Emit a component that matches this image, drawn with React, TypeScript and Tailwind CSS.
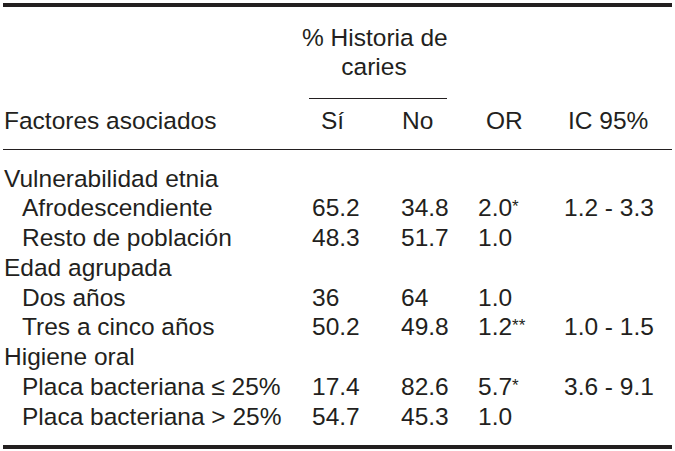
type Row = {
  label: string;
  group?: boolean;
  si?: string;
  no?: string;
  or?: string;
  mark?: string;
  ic?: string;
};

const rows: Row[] = [
  { label: 'Vulnerabilidad etnia', group: true },
  { label: 'Afrodescendiente', si: '65.2', no: '34.8', or: '2.0', mark: '*', ic: '1.2 - 3.3' },
  { label: 'Resto de población', si: '48.3', no: '51.7', or: '1.0' },
  { label: 'Edad agrupada', group: true },
  { label: 'Dos años', si: '36', no: '64', or: '1.0' },
  { label: 'Tres a cinco años', si: '50.2', no: '49.8', or: '1.2', mark: '**', ic: '1.0 - 1.5' },
  { label: 'Higiene oral', group: true },
  { label: 'Placa bacteriana ≤ 25%', si: '17.4', no: '82.6', or: '5.7', mark: '*', ic: '3.6 - 9.1' },
  { label: 'Placa bacteriana > 25%', si: '54.7', no: '45.3', or: '1.0' },
];

const cols = 'grid grid-cols-[309px_89px_77px_86px_108px]';

const App = () => {
  return (
    <div className="w-[675px] h-[451px] bg-white overflow-hidden">
      <div className="ml-[3px] w-[669px] pt-[3px] text-[24.5px] text-[#231f20] font-['Liberation_Sans',Arial,sans-serif]">
        <div className="h-[4px] bg-[#231f20]"></div>

        {/* header */}
        <div className={cols}>
          <div className="col-start-2 col-span-2 pt-[16px]">
            <div className="ml-[-10px] w-[144px] text-center leading-[29px] whitespace-nowrap">
              % Historia de
              <br />
              caries
            </div>
            <div className="ml-[-3px] mt-[17px] w-[138px] h-[1px] bg-[#231f20]"></div>
          </div>
        </div>
        <div className={`${cols} mt-[6.6px] leading-[29.75px] whitespace-nowrap`}>
          <div className="pl-[1px]">Factores asociados</div>
          <div className="pl-[9px]">Sí</div>
          <div className="pl-[1px]">No</div>
          <div className="pl-[8px]">OR</div>
          <div className="pl-[4px]">IC 95%</div>
        </div>
        <div className="mt-[13.65px] h-[1px] bg-[#231f20]"></div>

        {/* body */}
        <div className="pt-[13.64px] pb-[13.6px]">
          {rows.map((r) => (
            <div key={r.label} className={`${cols} h-[29.75px] leading-[29.75px] whitespace-nowrap`}>
              <div className={r.group ? 'pl-[1px]' : 'pl-[19px]'}>{r.label}</div>
              <div>{r.si}</div>
              <div>{r.no}</div>
              <div>
                {r.or}
                {r.mark && <span className="relative top-[-4px] text-[17px]">{r.mark}</span>}
              </div>
              <div>{r.ic}</div>
            </div>
          ))}
        </div>
        <div className="h-[4px] bg-[#231f20]"></div>
      </div>
    </div>
  );
};

export default App;
